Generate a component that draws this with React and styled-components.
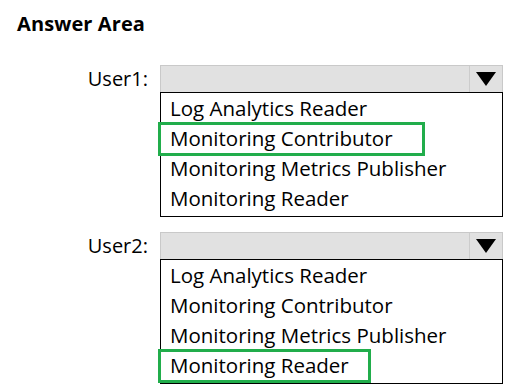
import React from "react";
import styled, { createGlobalStyle } from "styled-components";

const GlobalStyle = createGlobalStyle`
  body {
    margin: 0;
    background: #ffffff;
    font-family: "Open Sans", "Noto Sans", sans-serif;
    color: #000000;
  }
`;

const Page = styled.div`
  padding: 10px 6px 0 17px;
`;

const Title = styled.div`
  font: bold 20px/28px "Open Sans", sans-serif;
  letter-spacing: 0.1px;
  margin-bottom: 27px;
`;

const Row = styled.div`
  display: grid;
  grid-template-columns: 131px 343px;
  column-gap: 12px;
  margin-bottom: 15px;
`;

const Label = styled.div`
  height: 27px;
  display: flex;
  align-items: center;
  justify-content: flex-end;
  font-size: 20px;
`;

const Dropdown = styled.div`
  display: flex;
  flex-direction: column;
`;

const Bar = styled.div`
  display: flex;
  height: 27px;
  box-sizing: border-box;
  background: #e1e1e1;
  border: 1px solid #c9c9c9;
  border-bottom: none;
`;

const Field = styled.div`
  flex: 1;
`;

const ArrowButton = styled.div`
  width: 32px;
  display: flex;
  align-items: center;
  justify-content: center;
  border-left: 1px solid #cccccc;
`;

const List = styled.div`
  border: 1px solid #000000;
  padding-bottom: 3px;
`;

const Option = styled.div`
  position: relative;
  height: 30px;
  line-height: 30px;
  padding-left: 9px;
  font-size: 20.5px;
  white-space: nowrap;

  ${props =>
    props.selected &&
    `
    &::before {
      content: "";
      position: absolute;
      left: -3px;
      top: -1px;
      width: ${props.boxWidth}px;
      height: 34px;
      box-sizing: border-box;
      border: 3px solid #21ad4b;
    }
  `}
`;

const Arrow = () => (
  <svg width="20" height="14" viewBox="0 0 20 14">
    <polygon points="0,0 20,0 10,14" fill="#000" />
  </svg>
);

const roles = [
  "Log Analytics Reader",
  "Monitoring Contributor",
  "Monitoring Metrics Publisher",
  "Monitoring Reader",
];

const Select = ({ user, selected, boxWidth }) => (
  <Row>
    <Label>{user}:</Label>
    <Dropdown>
      <Bar>
        <Field />
        <ArrowButton>
          <Arrow />
        </ArrowButton>
      </Bar>
      <List>
        {roles.map(role => (
          <Option
            key={role}
            selected={role === selected}
            boxWidth={boxWidth}
          >
            {role}
          </Option>
        ))}
      </List>
    </Dropdown>
  </Row>
);

export default function App() {
  return (
    <Page>
      <GlobalStyle />
      <Title>Answer Area</Title>
      <Select user="User1" selected="Monitoring Contributor" boxWidth={267} />
      <Select user="User2" selected="Monitoring Reader" boxWidth={213} />
    </Page>
  );
}
